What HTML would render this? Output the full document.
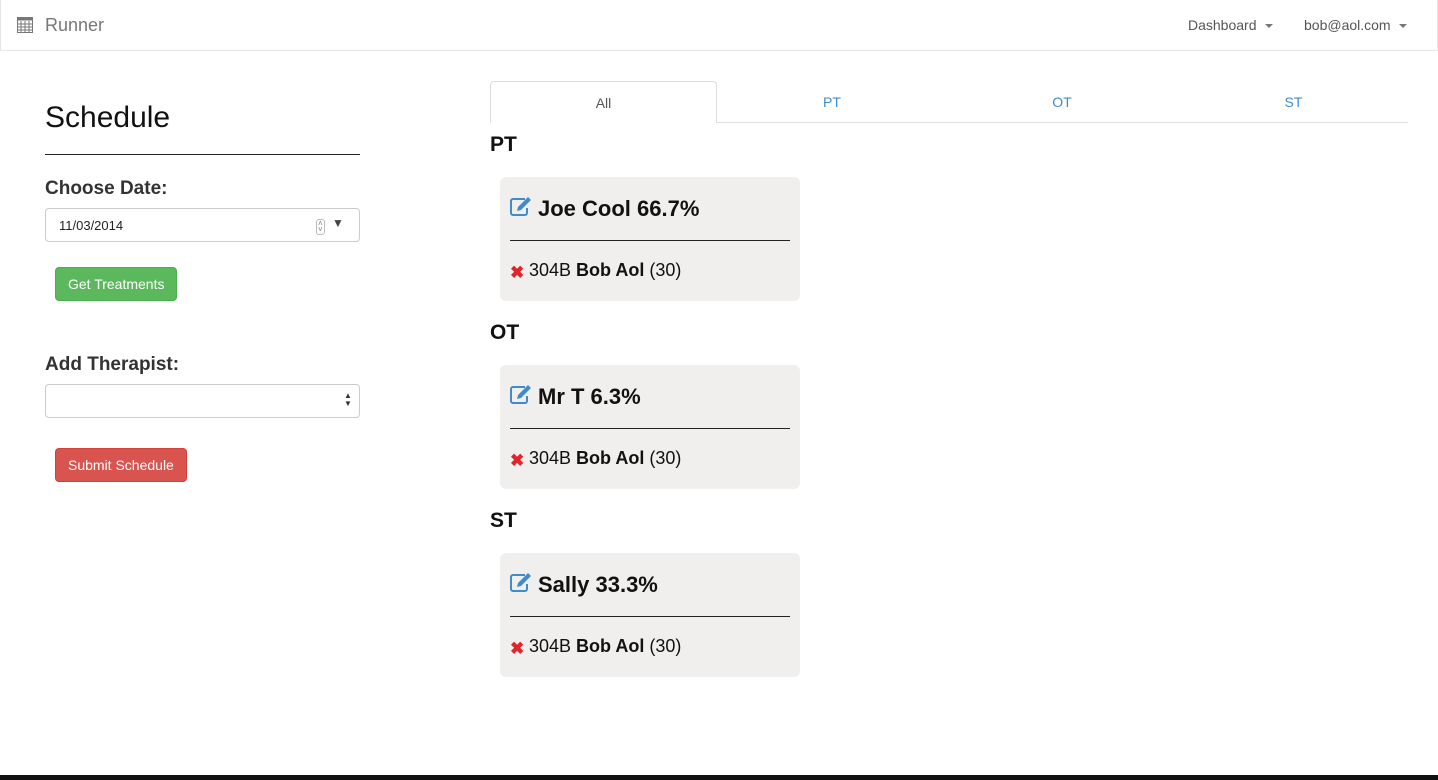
<!DOCTYPE html>
<html><head><style>
*{box-sizing:border-box}
body{margin:0;width:1438px;height:780px;font-family:"Liberation Sans",sans-serif;color:#333;background:#fff;position:relative;overflow:hidden}
.nav{position:absolute;left:0;top:0;width:1438px;height:51px;border:1px solid #e7e7e7;border-top:none;background:#fff}
.abs{position:absolute}
.brand{left:44px;top:15px;font-size:18px;color:#777}
.navr{top:17px;font-size:14px;color:#555}
.caret{display:inline-block;border-top:4px solid #777;border-left:4px solid transparent;border-right:4px solid transparent;vertical-align:middle;margin-left:8px}
h2{position:absolute;left:45px;top:101px;margin:0;font-size:30px;font-weight:normal;color:#111}
.hr1{left:45px;top:154px;width:315px;border-top:1px solid #222}
.lbl{font-size:19px;font-weight:bold;color:#333}
.inp{border:1px solid #ccc;border-radius:4px;background:#fff;width:315px;height:34px}
.btn{color:#fff;font-size:14px;border-radius:4px;height:34px;line-height:32px;padding:0 12px}
.tabs{left:490px;top:122px;width:918px;border-top:1px solid #ddd}
.tab{top:81px;height:42px;line-height:42px;text-align:center;font-size:14px;color:#428bca}
.sec{left:490px;font-size:21px;font-weight:bold;color:#111}
.card{left:500px;width:300px;height:124px;background:#f0efee;border-radius:6px}
.card .t{position:absolute;left:38px;top:19px;font-size:22px;font-weight:bold;color:#111}
.card .h{position:absolute;left:10px;top:63px;width:280px;border-top:1px solid #222}
.card .r{position:absolute;left:29px;top:83px;font-size:18px;color:#111}
.card .x{position:absolute;left:10px;top:86px;color:#e0252b;font-size:17px;font-weight:bold}
.card svg{position:absolute;left:10px;top:20px}
</style></head><body>
<div class="nav">
<svg class="abs" style="left:16px;top:17px" width="16" height="16" viewBox="0 0 16 16"><rect x="0.5" y="0.5" width="15" height="15" fill="none" stroke="#777"/><rect x="0.5" y="0.5" width="15" height="3" fill="#777"/><path d="M4 4v12M8 4v12M12 4v12M0 7h16M0 10h16M0 13h16" stroke="#777"/></svg>
<div class="abs brand">Runner</div>
<div class="abs navr" style="left:1187px">Dashboard<span class="caret"></span></div>
<div class="abs navr" style="left:1303px">bob@aol.com<span class="caret"></span></div>
</div>
<h2>Schedule</h2>
<div class="abs hr1"></div>
<div class="abs lbl" style="left:45px;top:178px">Choose Date:</div>
<div class="abs inp" style="left:45px;top:208px"><span class="abs" style="left:13px;top:9px;font-size:13px;color:#222">11/03/2014</span><span class="abs" style="left:270px;top:10px;font-size:8px;color:#777;border:1px solid #bbb;border-radius:3px;line-height:6px;padding:1px 1px">˄<br>˅</span><span class="abs" style="left:286px;top:7px;font-size:12px;color:#444">▼</span></div>
<div class="abs btn" style="left:55px;top:267px;background:#5cb85c;border:1px solid #4cae4c">Get Treatments</div>
<div class="abs lbl" style="left:45px;top:354px">Add Therapist:</div>
<div class="abs inp" style="left:45px;top:384px"><span class="abs" style="left:298px;top:7px;font-size:8px;line-height:8px;color:#333">▲<br>▼</span></div>
<div class="abs btn" style="left:55px;top:448px;background:#d9534f;border:1px solid #d43f3a">Submit Schedule</div>

<div class="abs tabs"></div>
<div class="abs tab" style="left:490px;width:227px;border:1px solid #ddd;border-bottom:1px solid #fff;border-radius:4px 4px 0 0;color:#555;background:#fff">All</div>
<div class="abs tab" style="left:717px;width:230px">PT</div>
<div class="abs tab" style="left:947px;width:230px">OT</div>
<div class="abs tab" style="left:1177px;width:233px">ST</div>

<div class="abs sec" style="top:133px">PT</div>
<div class="abs sec" style="top:321px">OT</div>
<div class="abs sec" style="top:509px">ST</div>

<div class="abs card" style="top:177px"><svg width="22" height="20" viewBox="0 0 22 20"><path d="M15 2H3a2 2 0 0 0-2 2v12a2 2 0 0 0 2 2h12a2 2 0 0 0 2-2v-5" fill="none" stroke="#428bca" stroke-width="2"/><path d="M18 0l3 3-10 10-4 1 1-4z" fill="#428bca"/></svg><div class="t">Joe Cool 66.7%</div><div class="h"></div><div class="x">✖</div><div class="r">304B <b>Bob Aol</b> (30)</div></div>
<div class="abs card" style="top:365px"><svg width="22" height="20" viewBox="0 0 22 20"><path d="M15 2H3a2 2 0 0 0-2 2v12a2 2 0 0 0 2 2h12a2 2 0 0 0 2-2v-5" fill="none" stroke="#428bca" stroke-width="2"/><path d="M18 0l3 3-10 10-4 1 1-4z" fill="#428bca"/></svg><div class="t">Mr T 6.3%</div><div class="h"></div><div class="x">✖</div><div class="r">304B <b>Bob Aol</b> (30)</div></div>
<div class="abs card" style="top:553px"><svg width="22" height="20" viewBox="0 0 22 20"><path d="M15 2H3a2 2 0 0 0-2 2v12a2 2 0 0 0 2 2h12a2 2 0 0 0 2-2v-5" fill="none" stroke="#428bca" stroke-width="2"/><path d="M18 0l3 3-10 10-4 1 1-4z" fill="#428bca"/></svg><div class="t">Sally 33.3%</div><div class="h"></div><div class="x">✖</div><div class="r">304B <b>Bob Aol</b> (30)</div></div>

<div class="abs" style="left:0;top:775px;width:1438px;height:5px;background:#111"></div>
</body></html>
